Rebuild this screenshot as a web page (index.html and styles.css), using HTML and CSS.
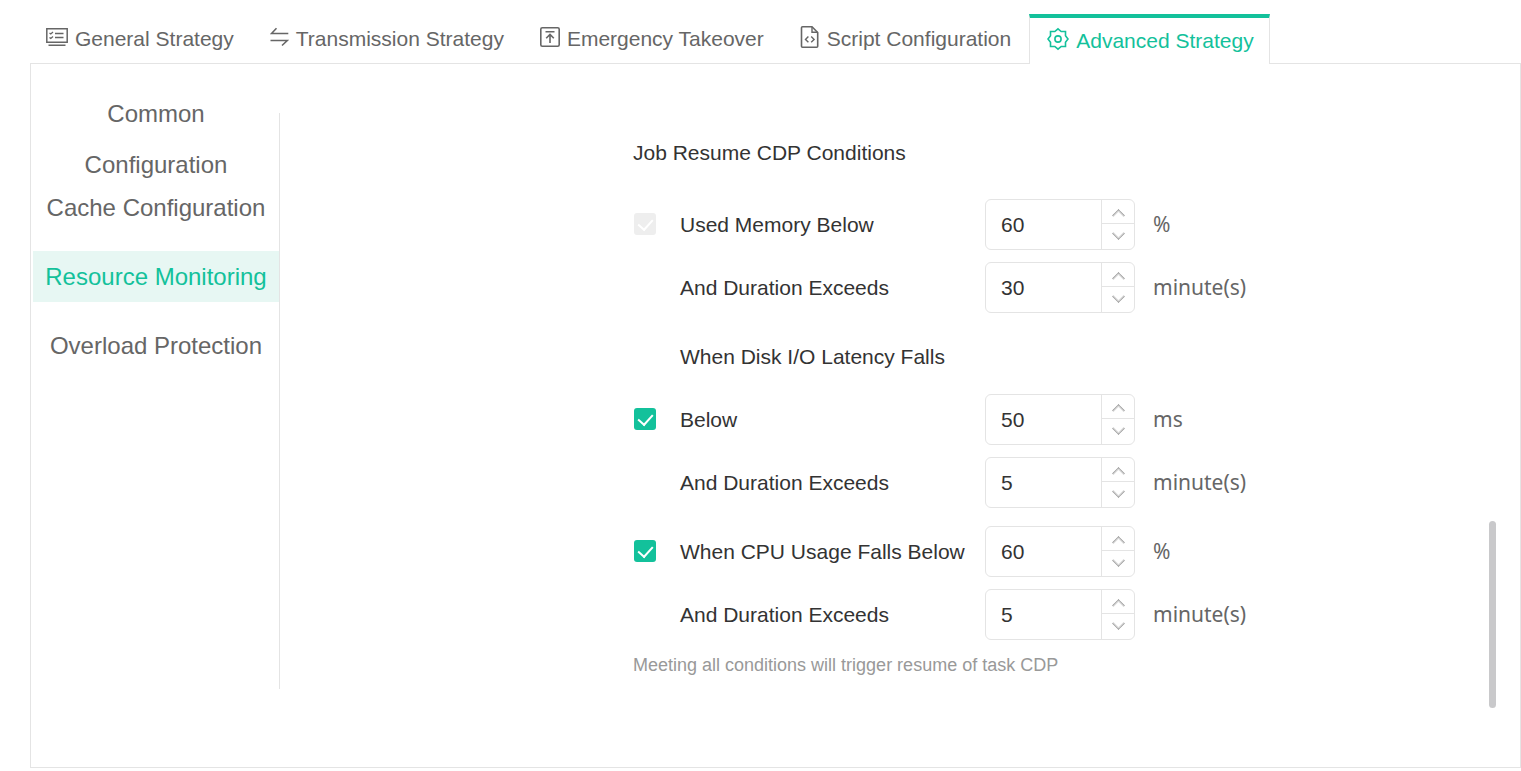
FILE: index.html
```html
<!DOCTYPE html>
<html lang="en">
<head>
    <meta charset="UTF-8">
    <title>Advanced Strategy</title>
    <link rel="stylesheet" href="styles.css">
</head>
<body>
<div class="tabs" role="tablist">
    <button type="button" class="tab" role="tab">
        <svg width="22" height="22" viewBox="0 0 22 22" fill="none" stroke="currentColor" stroke-width="1.5">
            <path d="M.8 2.700h20.400v13.600H.8zM2.500 19.300h17"/>
            <path d="M3.500 7l1.300 1 2.200-2M3.500 11.500l1.300 1 2.200-2M9 7.500h8.500M9 11.500h8.500" stroke-width="1.300"/>
        </svg>
        General Strategy
    </button>
    <button type="button" class="tab" role="tab">
        <svg width="19" height="22" viewBox="0 0 19 22" fill="none" stroke="currentColor" stroke-width="1.600">
            <path d="M6.500 2.200L1.500 7.500h16.800M.5 14.500h16.800L12 19.500"/>
        </svg>
        Transmission Strategy
    </button>
    <button type="button" class="tab" role="tab">
        <svg width="20" height="22" viewBox="0 0 20 22" fill="none" stroke="currentColor" stroke-width="1.600">
            <rect x=".8" y="1.800" width="18.400" height="18.400" rx="1.500"/>
            <path d="M5.500 5.700h9M10 17V8.500M6.200 12.300L10 8.500l3.800 3.800" stroke-width="1.600"/>
        </svg>
        Emergency Takeover
    </button>
    <button type="button" class="tab" role="tab">
        <svg width="20" height="24" viewBox="0 0 20 24" fill="none" stroke="currentColor" stroke-width="1.600">
            <path d="M12 1.800H2.500q-1 0-1 1v18.400q0 1 1 1h14.200q1 0 1-1V7.500z"/>
            <path d="M12 2v5.300h5.500" stroke-width="1.400"/>
            <path d="M8.400 11.500l-2.900 2.900 2.900 2.900M11.200 11.500l2.900 2.900-2.900 2.900" stroke-width="1.400"/>
        </svg>
        Script Configuration
    </button>
    <button type="button" class="tab active" role="tab" aria-selected="true">
        <svg width="22" height="24" viewBox="0 0 22 24" fill="none" stroke="currentColor" stroke-width="1.600">
            <path d="M11 1.800l3.200 2.700h4.300v4.300L21 12l-2.500 3.200v4.300h-4.300L11 22.200l-3.200-2.700H3.500v-4.300L1 12l2.500-3.200V4.500h4.300z"/>
            <circle cx="11" cy="12" r="3.100"/>
        </svg>
        Advanced Strategy
    </button>
</div>

<div class="panel">
    <nav class="side">
        <a href="#common">Common Configuration</a>
        <a href="#cache">Cache Configuration</a>
        <a href="#resource" class="active">Resource Monitoring</a>
        <a href="#overload">Overload Protection</a>
    </nav>

    <form class="content">
        <h3>Job Resume CDP Conditions</h3>

        <div class="group">
            <input type="checkbox" id="memOn" checked disabled>
            <label for="memOn">Used Memory Below</label>
            <div class="number">
                <input type="number" value="60" aria-label="Used memory">
                <button type="button" class="up" aria-label="Increase"></button>
                <button type="button" class="down" aria-label="Decrease"></button>
            </div>
            <span class="unit">%</span>

            <label for="memTime" class="duration">And Duration Exceeds</label>
            <div class="number">
                <input type="number" id="memTime" value="30">
                <button type="button" class="up" aria-label="Increase"></button>
                <button type="button" class="down" aria-label="Decrease"></button>
            </div>
            <span class="unit">minute(s)</span>
        </div>

        <div class="group">
            <input type="checkbox" id="diskOn" checked>
            <label for="diskOn">When Disk I/O Latency Falls Below</label>
            <div class="number">
                <input type="number" value="50" aria-label="Disk I/O latency">
                <button type="button" class="up" aria-label="Increase"></button>
                <button type="button" class="down" aria-label="Decrease"></button>
            </div>
            <span class="unit">ms</span>

            <label for="diskTime" class="duration">And Duration Exceeds</label>
            <div class="number">
                <input type="number" id="diskTime" value="5">
                <button type="button" class="up" aria-label="Increase"></button>
                <button type="button" class="down" aria-label="Decrease"></button>
            </div>
            <span class="unit">minute(s)</span>
        </div>

        <div class="group">
            <input type="checkbox" id="cpuOn" checked>
            <label for="cpuOn">When CPU Usage Falls Below</label>
            <div class="number">
                <input type="number" value="60" aria-label="CPU usage">
                <button type="button" class="up" aria-label="Increase"></button>
                <button type="button" class="down" aria-label="Decrease"></button>
            </div>
            <span class="unit">%</span>

            <label for="cpuTime" class="duration">And Duration Exceeds</label>
            <div class="number">
                <input type="number" id="cpuTime" value="5">
                <button type="button" class="up" aria-label="Increase"></button>
                <button type="button" class="down" aria-label="Decrease"></button>
            </div>
            <span class="unit">minute(s)</span>
        </div>

        <p class="tip">Meeting all conditions will trigger resume of task CDP</p>
    </form>

    <div class="scroll-thumb"></div>
</div>
<script src="script.js"></script>
</body>
</html>
```
FILE: styles.css
```css
* {
    box-sizing: border-box;
}

body {
    margin: 0;
    padding: 14px 0 3px 30px;
    background: white;
    color: #666;
    font-family: "Liberation Sans", Arial, sans-serif;
    font-size: 21px;
}

button {
    padding: 0;
    border: 0;
    background: none;
    color: inherit;
    font: inherit;
    cursor: pointer;
}

/* tabs */
.tabs {
    display: flex;
    height: 50px;
    margin-left: -2px;
}

.tab {
    display: flex;
    align-items: center;
    gap: 7px;
    padding: 0 18px;
    white-space: nowrap;
}

.tab svg {
    flex: none;
    margin-bottom: 4px;
}

.tab.active {
    z-index: 1;
    padding: 0 15px 0 17px;
    border: 1px solid #e4e4e4;
    border-top: 4px solid #13c19b;
    border-bottom: 0;
    background: white;
    color: #13c19b;
}

/* panel */
.panel {
    position: relative;
    display: flex;
    margin-top: -1px;
    padding: 49px 0 78px 2px;
    border: 1px solid #e4e4e4;
}

.side {
    display: flex;
    flex-direction: column;
    gap: 18px;
    width: 247px;
    border-right: 1px solid #e4e4e4;
    font-size: 24px;
    line-height: 51px;
    text-align: center;
}

.side a {
    display: flex;
    align-items: center;
    justify-content: center;
    height: 51px;
    padding: 0 10px;
    color: #666;
    text-decoration: none;
}

.side .active {
    background: #e7f7f3;
    color: #13c19b;
}

/* conditions */
.content {
    flex: 1;
    padding: 8px 24px 10px 353px;
    color: #333;
}

.content h3 {
    margin: 0 0 9px;
    font-size: 21px;
    font-weight: normal;
    line-height: 63px;
}

.group {
    display: grid;
    grid-template-columns: 47px 305px 150px auto;
    align-items: end;
    margin-bottom: 6px;
    line-height: 63px;
}

.duration {
    grid-column: 2;
}

.number {
    display: grid;
    grid-template-columns: 1fr 33px;
    grid-template-rows: 23px 26px;
    height: 51px;
    margin-bottom: 6px;
    border: 1px solid #e4e4e4;
    border-radius: 6px;
    line-height: 23px;
}

.number input {
    grid-row: 1 / 3;
    min-width: 0;
    padding: 0 0 0 15px;
    border: 0;
    outline: 0;
    background: none;
    color: #333;
    font: inherit;
    appearance: textfield;
}

.number input::-webkit-inner-spin-button {
    appearance: none;
}

.number button {
    display: flex;
    align-items: center;
    justify-content: center;
    border-left: 1px solid #e4e4e4;
}

.number .down {
    border-top: 1px solid #e4e4e4;
}

.number button::after {
    content: "";
    width: 8px;
    height: 8px;
    border: solid #999;
    border-width: 1px 0 0 1px;
    box-shadow: inset 1px 1px #ddd;
    transform: translateY(4px) rotate(45deg);
}

.number .down::after {
    border-width: 0 1px 1px 0;
    box-shadow: inset -1px -1px #ddd;
    transform: translateY(-3px) rotate(45deg);
}

.unit {
    padding-left: 18px;
    color: #666;
    font-family: "Noto Sans", sans-serif;
}

input[type="checkbox"] {
    display: flex;
    justify-content: center;
    width: 22px;
    height: 22px;
    margin: 0 0 21px 1px;
    border-radius: 3px;
    background: #13c19b;
    appearance: none;
}

input[type="checkbox"]::after {
    content: "";
    width: 7px;
    height: 12px;
    margin-top: 3px;
    border: solid white;
    border-width: 0 2px 2px 0;
    transform: rotate(42deg);
}

input[type="checkbox"]:disabled {
    background: #eee;
}

.tip {
    margin: 0;
    color: #999;
    font-size: 18px;
    line-height: 27px;
}

.scroll-thumb {
    position: absolute;
    right: 24px;
    bottom: 59px;
    width: 7px;
    height: 187px;
    border-radius: 4px;
    background: #c9c9cb;
}
```
FILE: script.js
```js
document.querySelectorAll(".number").forEach(function (box) {
    let input = box.querySelector("input");
    box.querySelector(".up").onclick = function () {
        input.stepUp();
    };
    box.querySelector(".down").onclick = function () {
        input.stepDown();
    };
});
```
